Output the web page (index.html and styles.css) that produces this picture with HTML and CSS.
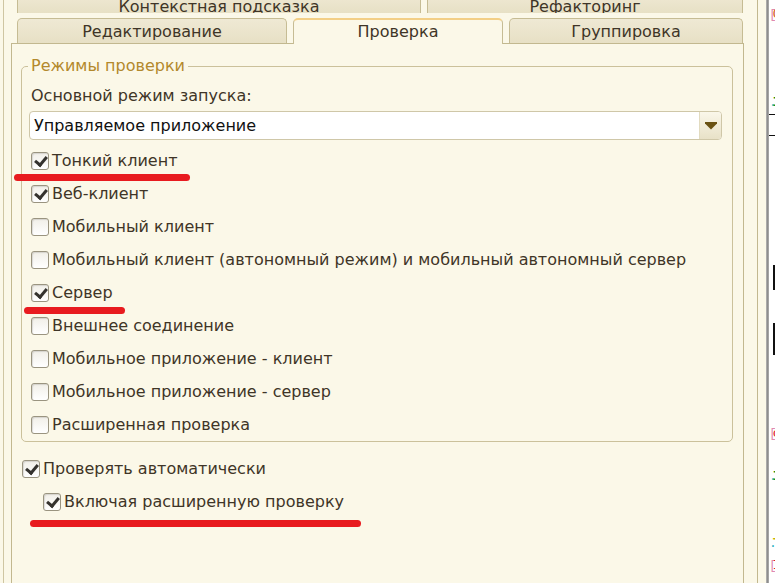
FILE: index.html
```html
<!DOCTYPE html>
<html lang="ru">
<head>
<meta charset="utf-8">
<title>Проверка</title>
<link rel="stylesheet" href="styles.css">
</head>
<body>
<div class="screen">
  <div class="main">
    <div class="frame">
      <div class="tabs tabs-top">
        <div class="tab tab-ctx">Контекстная подсказка</div>
        <div class="tab tab-fill">Рефакторинг</div>
      </div>
      <div class="tabs tabs-bottom">
        <div class="tab tab-edit">Редактирование</div>
        <div class="tab tab-active">Проверка</div>
        <div class="tab tab-fill">Группировка</div>
      </div>
      <div class="panel">
        <fieldset class="group">
          <legend class="group-title">Режимы проверки</legend>
          <div class="group-body">
            <div class="field-label">Основной режим запуска:</div>
            <div class="select">
              <div class="select-value">Управляемое приложение</div>
              <div class="select-btn">
                <svg width="12" height="8" viewBox="0 0 12 8"><polygon points="0,0 12,0 12,1.5 6,7.5 0,1.5" fill="#6a5214"/></svg>
              </div>
            </div>
            <div class="checks">
              <label class="check"><span class="box on"></span><span>Тонкий клиент</span></label>
              <label class="check"><span class="box on"></span><span>Веб-клиент</span></label>
              <label class="check"><span class="box"></span><span>Мобильный клиент</span></label>
              <label class="check"><span class="box"></span><span>Мобильный клиент (автономный режим) и мобильный автономный сервер</span></label>
              <label class="check"><span class="box on"></span><span>Сервер</span></label>
              <label class="check"><span class="box"></span><span>Внешнее соединение</span></label>
              <label class="check"><span class="box"></span><span>Мобильное приложение - клиент</span></label>
              <label class="check"><span class="box"></span><span>Мобильное приложение - сервер</span></label>
              <label class="check"><span class="box"></span><span>Расширенная проверка</span></label>
            </div>
          </div>
        </fieldset>
        <div class="auto">
          <label class="check"><span class="box on"></span><span>Проверять автоматически</span></label>
          <label class="check sub"><span class="box on"></span><span>Включая расширенную проверку</span></label>
        </div>
      </div>
    </div>
  </div>
  <div class="sep"></div>
  <div class="code">
    <div class="cl l1"><span class="c-pk">[</span><span class="c-or">С</span></div>
    <div class="cl l2"><span class="c-tl">.</span><span class="c-gr">I</span></div>
    <div class="hr h1"></div>
    <div class="hr h2"></div>
    <div class="vbar b1"></div>
    <div class="vbar b2"></div>
    <div class="cl l3"><span class="c-pk">[</span><span class="c-rd">с</span></div>
    <div class="cl l4"><span class="c-tl">.</span><span class="c-gr">I</span></div>
    <div class="cl l5"><span class="c-tl">.</span><span class="c-yl">Т</span></div>
    <div class="cl l6"><span class="c-pk">[</span><span class="c-rd">I</span></div>
  </div>

  <div class="mark m1"></div>
  <div class="mark m2"></div>
  <div class="mark m3"></div>
</div>
</body>
</html>
```
FILE: styles.css
```css
* { box-sizing: border-box; }
html, body { margin: 0; padding: 0; }
body {
  background: #fbf8e8;
  font-family: "DejaVu Sans", "Liberation Sans", sans-serif;
  font-size: 16px;
  color: #3f3527;
  overflow: hidden;
}
.screen {
  position: relative;
  display: flex;
  width: 775px;
  height: 583px;
  overflow: hidden;
}
.main {
  width: 766px;
  height: 583px;
  padding-left: 3px;
  overflow: hidden;
  flex: none;
}
.frame {
  display: flex;
  flex-direction: column;
  width: 755px;
  height: 100%;
  border-left: 1px solid #cfc6a2;
  border-right: 1px solid #c2b88f;
  padding: 0 13px 0 7px;
}
.tabs {
  display: flex;
  gap: 6px;
  padding: 0 1px 0 6px;
  flex: none;
}
.tabs-top { margin-top: -7px; height: 20px; }
.tabs-bottom { margin-top: 5px; height: 25px; }
.tab {
  border: 1px solid #c6bc94;
  border-bottom: none;
  border-radius: 5px 5px 0 0;
  background: linear-gradient(#efe9d4, #e7e0c5);
  text-align: center;
  white-space: nowrap;
  overflow: hidden;
}
.tabs-top .tab { line-height: 16px; padding-top: 5px; }
.tabs-bottom .tab { line-height: 25px; }
.tab-ctx { width: 404px; }
.tab-fill { flex: 1; }
.tab-edit { width: 270px; }
.tab-active {
  position: relative;
  z-index: 1;
  width: 210px;
  height: 26px;
  background: #fbf8e8;
  border-top: 2px solid #f3cf86;
  line-height: 24px !important;
}
.panel {
  flex: 1;
  border: 1px solid #c2b88f;
  border-bottom: none;
  padding: 13px 10px 0 9px;
}
.group {
  margin: 0;
  padding: 0;
  min-width: 0;
  border: 1px solid #cbc19b;
  border-radius: 5px;
}
.group-title {
  margin-left: 6px;
  padding: 0 3px;
  line-height: 18px;
  color: #b3892c;
}
.group-body { padding: 0; }
.field-label {
  margin-top: 11px;
  height: 20px;
  line-height: 20px;
  padding-left: 9px;
}
.select {
  display: flex;
  margin: 5px 10px 0 7px;
  height: 29px;
  border: 1px solid #cfc7a8;
  border-radius: 4px;
  background: #fff;
  overflow: hidden;
}
.select-value {
  flex: 1;
  padding-left: 4px;
  line-height: 27px;
  color: #111;
}
.select-btn {
  width: 22px;
  border-left: 1px solid #e2dbc0;
  background: linear-gradient(#faf7ea, #e8e1c7);
  display: flex;
  align-items: center;
  justify-content: center;
}
.checks { margin-top: 4px; padding-left: 9px; }
.check {
  display: flex;
  align-items: center;
  gap: 3px;
  height: 33px;
  white-space: nowrap;
}
.box {
  flex: none;
  width: 18px;
  height: 18px;
  border: 1px solid #9a9480;
  border-radius: 3px;
  background: linear-gradient(#f1efe8, #ffffff);
  box-shadow: inset 1px 1px 1px rgba(0,0,0,0.12);
  position: relative;
}
.box.on::after {
  content: "";
  position: absolute;
  left: 5px;
  top: 1px;
  width: 5px;
  height: 9px;
  border: solid #34322e;
  border-width: 0 3px 3px 0;
  transform: rotate(40deg);
}
.auto { margin-top: 10px; padding-left: 1px; }
.check.sub { padding-left: 21px; }

.sep {
  flex: none;
  width: 3px;
  background: linear-gradient(90deg, #b8b8b8, #8e8e8e, #b0b0b0);
}
.code {
  flex: 1;
  background: #fff;
  display: flex;
  flex-direction: column;
  font-family: "Liberation Mono", monospace;
  font-size: 13px;
  line-height: 12px;
  overflow: hidden;
}
.cl { height: 12px; white-space: nowrap; letter-spacing: -4px; }
.c-pk { color: #e08ab0; }
.c-or { color: #d4601c; }
.c-tl { color: #27b0c0; }
.c-gr { color: #0a8a0a; font-weight: bold; }
.c-rd { color: #e01020; }
.c-yl { color: #c8b400; font-weight: bold; }
.hr { height: 1px; background: #111; }
.vbar { width: 2px; margin-left: 4px; background: #111; }
.l1 { margin-top: 9px; }
.l2 { margin-top: 76px; }
.h1 { margin-top: 5px; }
.h2 { margin-top: 20px; }
.b1 { margin-top: 129px; height: 25px; }
.b2 { margin-top: 33px; height: 32px; }
.l3 { margin-top: 73px; }
.l4 { margin-top: 31px; }
.l5 { margin-top: 55px; }
.l6 { margin-top: 10px; }

.mark {
  position: absolute;
  height: 7px;
  border-radius: 4px;
  background: #e81b1f;
}
.m1 { left: 14px; top: 174px; width: 176px; }
.m2 { left: 24px; top: 307px; width: 101px; }
.m3 { left: 30px; top: 520px; width: 331px; }
```
